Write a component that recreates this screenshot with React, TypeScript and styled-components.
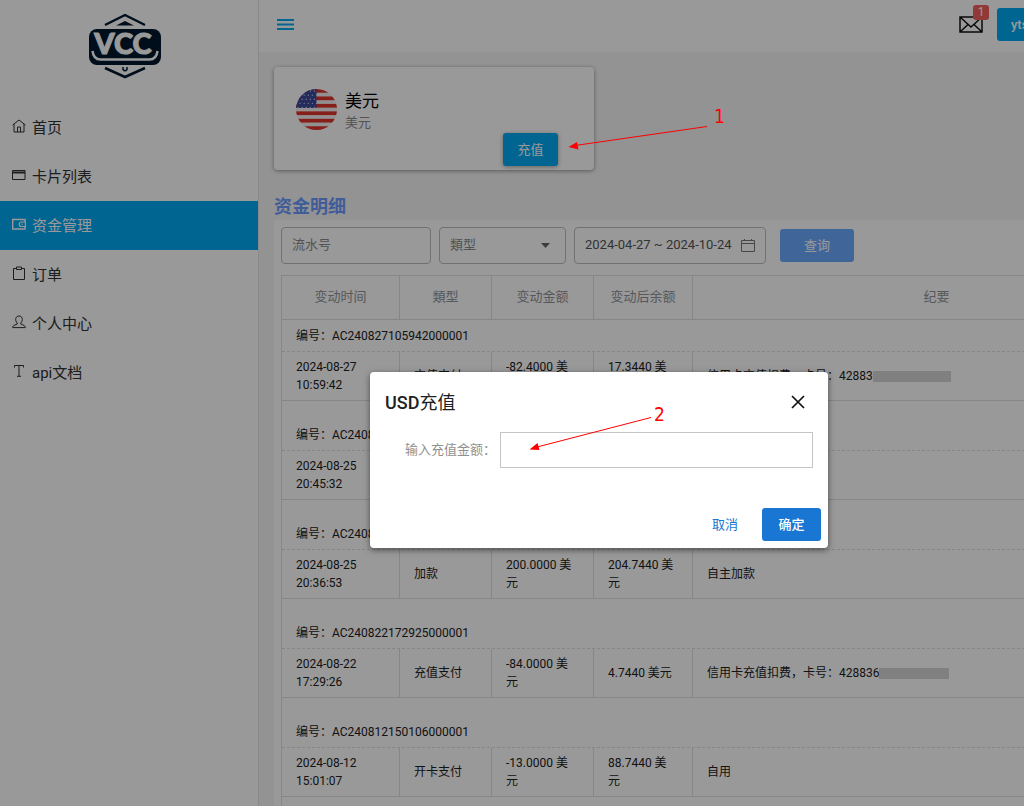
import React from "react";
import styled, { createGlobalStyle } from "styled-components";

const GlobalStyle = createGlobalStyle`
  *, *::before, *::after { box-sizing: border-box; }
  html, body { margin: 0; height: 100%; }
  body, button, input, select {
    font-family: Roboto, "Noto Sans CJK SC", sans-serif;
  }
  body { font-size: 13px; color: #212121; background: #f5f5f5; }
  button { cursor: pointer; }
`;

const Viewport = styled.div`
  height: 100vh;
  overflow: hidden;
`;

const Shell = styled.div`
  position: relative;
  display: flex;
  min-width: 1198px;
  min-height: 920px;
`;

/* ---------- sidebar ---------- */

const Sidebar = styled.aside`
  flex: none;
  width: 259px;
  background: #fff;
  border-right: 1px solid #e4e4e4;
`;

const Brand = styled.div`
  display: flex;
  justify-content: center;
  height: 103px;
  padding: 13px 8px 0 0;
`;

const NavItem = styled.a<{ $active?: boolean }>`
  display: flex;
  align-items: center;
  gap: 6px;
  height: 49px;
  padding: 0 0 3px 12px;
  font-size: 15px;
  text-decoration: none;
  color: ${(p) => (p.$active ? "#fff" : "#303133")};
  background: ${(p) => (p.$active ? "#03a9f4" : "transparent")};

  svg {
    flex: none;
  }
`;

/* ---------- main column ---------- */

const Main = styled.div`
  flex: 1;
  min-width: 0;
  display: flex;
  flex-direction: column;
  background: #f5f5f5;
`;

const TopBar = styled.header`
  display: flex;
  align-items: center;
  justify-content: space-between;
  height: 52px;
  padding: 0 10px 3px 17px;
  background: #fff;
`;

const IconButton = styled.button`
  display: flex;
  padding: 0;
  border: 0;
  background: none;
  color: inherit;
`;

const TopActions = styled.div`
  display: flex;
  align-items: center;
  gap: 14px;
`;

const MailButton = styled(IconButton)`
  position: relative;
`;

const Badge = styled.span`
  position: absolute;
  top: -11px;
  right: -6px;
  width: 16px;
  height: 15px;
  border-radius: 3px;
  background: #f0605a;
  color: #fff;
  font-size: 12px;
  line-height: 15px;
  text-align: center;
`;

const Button = styled.button<{ $tone?: "sky" | "soft" | "primary" | "text"; $width?: number }>`
  width: ${(p) => (p.$width ? p.$width + "px" : "auto")};
  height: 33px;
  padding: 0 0 3px;
  border: 0;
  border-radius: 3px;
  font-size: 13px;
  font-weight: ${(p) => (p.$tone === "primary" ? 500 : 400)};
  color: ${(p) => (p.$tone === "text" ? "#1976d2" : "#fff")};
  background: ${(p) =>
    ({ sky: "#03a9f4", soft: "#6caaff", primary: "#1976d2", text: "transparent" })[p.$tone || "sky"]};
`;

const RaisedButton = styled(Button)`
  box-shadow: 0 1px 4px rgba(0, 0, 0, 0.35);
`;

const UserButton = styled(Button)`
  padding: 0 0 0 14px;
  font-weight: 500;
  text-align: left;
`;

const Content = styled.main`
  flex: 1;
  padding: 15px 10px 0 15px;
`;

const WalletCard = styled.section`
  width: 320px;
  padding: 22px 0 4px;
  border-radius: 4px;
  background: #fff;
  box-shadow: 0 1px 4px rgba(0, 0, 0, 0.4);
`;

const WalletInfo = styled.div`
  display: flex;
  align-items: center;
  gap: 8px;
  height: 40px;
  padding-left: 22px;
`;

const WalletText = styled.div`
  padding-top: 3px;
`;

const WalletName = styled.div`
  font-size: 17px;
  line-height: 24px;
  color: #000;
`;

const WalletUnit = styled.div`
  font-size: 13px;
  line-height: 20px;
  color: #8a8a8a;
`;

const WalletActions = styled.div`
  display: flex;
  justify-content: flex-end;
  padding: 4px 36px 0 0;
`;

const SectionTitle = styled.h2`
  margin: 24px 0 0;
  font-size: 18px;
  line-height: 26px;
  font-weight: 700;
  color: #6b9bff;
`;

const Panel = styled.section`
  padding: 7px;
  background: #fff;
`;

const Filters = styled.form`
  display: flex;
  align-items: center;
  gap: 8px;
  margin-bottom: 11px;
`;

const Field = styled.label<{ $width: number }>`
  display: flex;
  align-items: center;
  width: ${(p) => p.$width}px;
  height: 37px;
  padding: 0 10px 2px;
  border: 1px solid #bdbdbd;
  border-radius: 4px;
  color: #606266;

  input,
  select {
    flex: 1;
    min-width: 0;
    padding: 0;
    border: 0;
    outline: 0;
    appearance: none;
    background: none;
    font-size: 13px;
    color: #555;
  }
  select,
  input::placeholder {
    color: #8a8a8a;
    opacity: 1;
  }
`;

const SearchButton = styled(Button)`
  margin-left: 6px;
`;

/* ---------- ledger table ---------- */

const line = "#e0e0e0";

const Ledger = styled.table`
  width: 100%;
  table-layout: fixed;
  border-collapse: separate;
  border-spacing: 0;
  border: 1px solid ${line};
  border-bottom: 0;
  font-size: 12px;
  line-height: 18px;
`;

const HeadCell = styled.th`
  height: 44px;
  padding: 0 0 2px;
  border-bottom: 1px solid ${line};
  font-size: 13px;
  font-weight: 400;
  color: #909399;

  &:not(:last-child) {
    border-right: 1px solid ${line};
  }
`;

const Spacer = styled.td`
  height: 18px;
  padding: 0;
`;

const GroupCell = styled.td`
  height: 32px;
  padding: 0 14px;
  border-bottom: 1px dashed ${line};
`;

const Cell = styled.td`
  height: 49px;
  padding: 0 14px;
  border-bottom: 1px solid ${line};

  &:not(:last-child) {
    border-right: 1px solid ${line};
  }
`;

const Redaction = styled.span<{ $width: number }>`
  display: inline-block;
  width: ${(p) => p.$width}px;
  height: 11px;
  vertical-align: -2px;
  background: #d6d6d6;
`;

/* ---------- dialog ---------- */

const Overlay = styled.div`
  position: absolute;
  inset: 0;
  display: flex;
  align-items: center;
  justify-content: center;
  background: rgba(0, 0, 0, 0.4);
`;

const Dialog = styled.div`
  width: 458px;
  border-radius: 4px;
  background: #fff;
  box-shadow: 0 2px 6px rgba(0, 0, 0, 0.5);
`;

const DialogHead = styled.div`
  display: flex;
  align-items: center;
  justify-content: space-between;
  height: 60px;
  padding: 0 23px 0 15px;
`;

const DialogTitle = styled.h3`
  margin: 0;
  padding-bottom: 2px;
  font-size: 18px;
  font-weight: 400;

  b {
    font-weight: 500;
  }
`;

const DialogBody = styled.div`
  display: flex;
  align-items: center;
  padding: 0 15px 40px 35px;

  label {
    width: 95px;
    padding-bottom: 3px;
    font-size: 13px;
    color: #909090;
  }
  input {
    flex: 1;
    min-width: 0;
    height: 36px;
    padding: 0 10px;
    border: 1px solid #c4c4c4;
    outline: 0;
    font-size: 13px;
  }
`;

const DialogFoot = styled.div`
  display: flex;
  justify-content: flex-end;
  gap: 8px;
  padding: 0 7px 7px 0;
`;

const Callouts = styled.svg`
  position: absolute;
  top: 0;
  left: 0;
  pointer-events: none;
`;

/* ---------- icons ---------- */

const Icon = ({ children }: { children: React.ReactNode }) => (
  <svg width="14" height="14" viewBox="0 0 14 14" fill="none" stroke="currentColor" strokeWidth="1" aria-hidden="true">
    {children}
  </svg>
);

const icons = {
  home: (
    <Icon>
      <path d="M.6 6 7 1l6.400 5M2 5v8h10V5M5.500 13V8h3v5" />
    </Icon>
  ),
  card: (
    <Icon>
      <path d="M.5 2.500h12.500v9H.5z" />
      <path d="M.5 4.500h12.500" strokeWidth="2" />
    </Icon>
  ),
  wallet: (
    <Icon>
      <path d="M13 5V2.500H.7v9.500H13V9.500" strokeWidth="1.400" />
      <path d="M13.400 5H9.500a2.200 2.200 0 0 0 0 4.500h3.900z" strokeWidth="1.200" />
      <path d="M9.500 7.200h1.500" />
    </Icon>
  ),
  order: (
    <Icon>
      <path d="M4.500 2.500H1.500v11h11v-11h-3M4.500 1h5v2.500h-5z" />
    </Icon>
  ),
  user: (
    <Icon>
      <path d="M5.200 8C3.800 6.600 3.500 5 3.800 3.300 4.300 1.600 5.600 1 7 1s2.700.6 3.200 2.300C10.500 5 10.200 6.600 8.800 8v1l3.600 1.600c.7.400.9 1 .9 2H.7c0-1 .2-1.600.9-2L5.200 9z" />
    </Icon>
  ),
  type: (
    <Icon>
      <path d="M2.500 3.500V1.500h9v2M7 1.500V12M5 12.300h4" />
    </Icon>
  ),
};

const Logo = () => (
  <svg width="74" height="66" viewBox="0 0 74 66" role="img" aria-label="VCC">
    <g fill="none" stroke="#00182e" strokeWidth="2.500" strokeLinejoin="round">
      <path d="M17 12 37 2l20 10" />
      <path d="M17 55 37 64l20-9" />
    </g>
    <path d="M28 12.500 37 8l9 4.500z" fill="#00182e" />
    <path d="M35 54v2.500q2 2.500 4 0V54" fill="none" stroke="#00182e" strokeWidth="1.500" />
    <rect x="1" y="16" width="72" height="36" rx="8" fill="#00182e" />
    <path d="M4.500 38q1 8.500 8 8.500h49q7 0 8-8.500" fill="none" stroke="#fff" strokeWidth="2.500" />
    <text
      x="35"
      y="41"
      textAnchor="middle"
      fontFamily="Lato, sans-serif"
      fontWeight="900"
      fontSize="29"
      fill="#fff"
      stroke="#fff"
      strokeWidth="1"
    >
      VCC
    </text>
  </svg>
);

const stripes = [0, 2, 4, 6, 8, 10];
const stars = [0, 1, 2, 3, 4].flatMap((r) => [0, 1, 2, 3, 4].map((c) => [c * 4 + (r % 2) * 2 + 2, r * 4 + 2]));

const Flag = () => (
  <svg width="41" height="41" viewBox="0 0 40 40" aria-hidden="true">
    <clipPath id="flag-round">
      <circle cx="20" cy="20" r="20" />
    </clipPath>
    <g clipPath="url(#flag-round)">
      <rect width="40" height="40" fill="#f4f0f0" />
      {stripes.map((i) => (
        <rect key={i} y={(i * 40) / 11} width="40" height={40 / 11} fill="#e0352b" />
      ))}
      <rect width="20" height="18.500" fill="#3c4a9c" />
      {stars.map(([x, y]) => (
        <circle key={`${x}-${y}`} cx={x} cy={y} r=".7" fill="#c8cdea" />
      ))}
    </g>
  </svg>
);

/* ---------- data ---------- */

const nav = [
  { label: "首页", icon: icons.home },
  { label: "卡片列表", icon: icons.card },
  { label: "资金管理", icon: icons.wallet, active: true },
  { label: "订单", icon: icons.order },
  { label: "个人中心", icon: icons.user },
  { label: "api文档", icon: icons.type },
];

type Entry = {
  no: string;
  date: string;
  time: string;
  kind?: string;
  amount?: string;
  balance?: string;
  memo?: string;
  hidden?: number;
};

const entries: Entry[] = [
  { no: "AC240827105942000001", date: "2024-08-27", time: "10:59:42", kind: "充值支付", amount: "-82.4000 美元", balance: "17.3440 美元", memo: "信用卡充值扣费，卡号：42883", hidden: 78 },
  { no: "AC240825204532000001", date: "2024-08-25", time: "20:45:32" },
  { no: "AC240825203653000001", date: "2024-08-25", time: "20:36:53", kind: "加款", amount: "200.0000 美元", balance: "204.7440 美元", memo: "自主加款" },
  { no: "AC240822172925000001", date: "2024-08-22", time: "17:29:26", kind: "充值支付", amount: "-84.0000 美元", balance: "4.7440 美元", memo: "信用卡充值扣费，卡号：428836", hidden: 70 },
  { no: "AC240812150106000001", date: "2024-08-12", time: "15:01:07", kind: "开卡支付", amount: "-13.0000 美元", balance: "88.7440 美元", memo: "自用" },
];

export default function App() {
  return (
    <Viewport lang="zh-CN">
      <GlobalStyle />
      <Shell>
        <Sidebar>
          <Brand>
            <Logo />
          </Brand>
          <nav>
            {nav.map((item) => (
              <NavItem key={item.label} href="#" $active={item.active}>
                {item.icon}
                {item.label}
              </NavItem>
            ))}
          </nav>
        </Sidebar>

        <Main>
          <TopBar>
            <IconButton type="button" aria-label="菜单">
              <svg width="19" height="13" viewBox="0 0 19 13" stroke="#03a9f4" strokeWidth="2" aria-hidden="true">
                <path d="M1 2h17M1 6.500h17M1 11h17" />
              </svg>
            </IconButton>
            <TopActions>
              <MailButton type="button" aria-label="消息">
                <svg width="24" height="17" viewBox="0 0 24 17" fill="none" stroke="#111" strokeWidth="1.500" aria-hidden="true">
                  <path d="M1 1h22v15H1zM1 1l11 10L23 1M1 16l8-7.500M23 16l-8-7.500" />
                </svg>
                <Badge>1</Badge>
              </MailButton>
              <UserButton type="button" $width={191}>
                yts
              </UserButton>
            </TopActions>
          </TopBar>

          <Content>
            <WalletCard>
              <WalletInfo>
                <Flag />
                <WalletText>
                  <WalletName>美元</WalletName>
                  <WalletUnit>美元</WalletUnit>
                </WalletText>
              </WalletInfo>
              <WalletActions>
                <RaisedButton type="button" $width={55}>
                  充值
                </RaisedButton>
              </WalletActions>
            </WalletCard>

            <SectionTitle>资金明细</SectionTitle>
            <Panel>
              <Filters onSubmit={(e) => e.preventDefault()}>
                <Field $width={150}>
                  <input aria-label="流水号" placeholder="流水号" />
                </Field>
                <Field $width={127}>
                  <select aria-label="類型" defaultValue="">
                    <option value="">類型</option>
                  </select>
                  <svg width="18" height="10" viewBox="0 0 18 10" aria-hidden="true">
                    <path d="M4 3h9l-4.500 5z" fill="#666" />
                  </svg>
                </Field>
                <Field $width={192}>
                  <input aria-label="日期" defaultValue="2024-04-27 ~ 2024-10-24" />
                  <svg width="14" height="14" viewBox="0 0 14 14" fill="none" stroke="#777" aria-hidden="true">
                    <path d="M.5 2.500h13v11H.5zM.5 5.500h13M3.500 1v2M10.500 1v2" />
                  </svg>
                </Field>
                <SearchButton type="submit" $tone="soft" $width={74}>
                  查询
                </SearchButton>
              </Filters>

              <Ledger>
                <colgroup>
                  <col width="118" />
                  <col width="92" />
                  <col width="102" />
                  <col width="99" />
                  <col />
                </colgroup>
                <thead>
                  <tr>
                    <HeadCell scope="col">变动时间</HeadCell>
                    <HeadCell scope="col">類型</HeadCell>
                    <HeadCell scope="col">变动金额</HeadCell>
                    <HeadCell scope="col">变动后余额</HeadCell>
                    <HeadCell scope="col">纪要</HeadCell>
                  </tr>
                </thead>
                {entries.map((entry, i) => (
                  <tbody key={entry.no}>
                    {i > 0 && (
                      <tr>
                        <Spacer colSpan={5} />
                      </tr>
                    )}
                    <tr>
                      <GroupCell colSpan={5}>编号：{entry.no}</GroupCell>
                    </tr>
                    <tr>
                      <Cell>
                        {entry.date} {entry.time}
                      </Cell>
                      <Cell>{entry.kind}</Cell>
                      <Cell>{entry.amount}</Cell>
                      <Cell>{entry.balance}</Cell>
                      <Cell>
                        {entry.memo}
                        {entry.hidden && <Redaction $width={entry.hidden} />}
                      </Cell>
                    </tr>
                  </tbody>
                ))}
                <tbody>
                  <tr>
                    <Spacer colSpan={5} />
                  </tr>
                </tbody>
              </Ledger>
            </Panel>
          </Content>
        </Main>

        <Overlay>
          <Dialog role="dialog" aria-modal="true" aria-labelledby="recharge-title">
            <DialogHead>
              <DialogTitle id="recharge-title">
                <b>USD</b>充值
              </DialogTitle>
              <IconButton type="button" aria-label="关闭">
                <svg width="14" height="14" viewBox="0 0 14 14" stroke="#111" strokeWidth="1.700" aria-hidden="true">
                  <path d="M1 1l12 12M13 1 1 13" />
                </svg>
              </IconButton>
            </DialogHead>
            <DialogBody>
              <label htmlFor="amount">输入充值金额：</label>
              <input id="amount" type="text" />
            </DialogBody>
            <DialogFoot>
              <Button type="button" $tone="text" $width={58}>
                取消
              </Button>
              <Button type="button" $tone="primary" $width={59}>
                确定
              </Button>
            </DialogFoot>
          </Dialog>
        </Overlay>

        <Callouts width="1024" height="806" viewBox="0 0 1024 806" fill="#f00" stroke="none">
          <path d="M707 126.500 575 145.500M651 417.500 537 447" stroke="#f00" strokeWidth="1" />
          <path d="M568.500 147l8.500-5 1.500 7.500zM529.500 449.500l8-6.500 2 7z" />
          <text x="714" y="123" fontFamily="'DejaVu Sans Condensed', 'DejaVu Sans', sans-serif" fontSize="19">
            1
          </text>
          <text x="654" y="421" fontFamily="'DejaVu Sans Condensed', 'DejaVu Sans', sans-serif" fontSize="19">
            2
          </text>
        </Callouts>
      </Shell>
    </Viewport>
  );
}
